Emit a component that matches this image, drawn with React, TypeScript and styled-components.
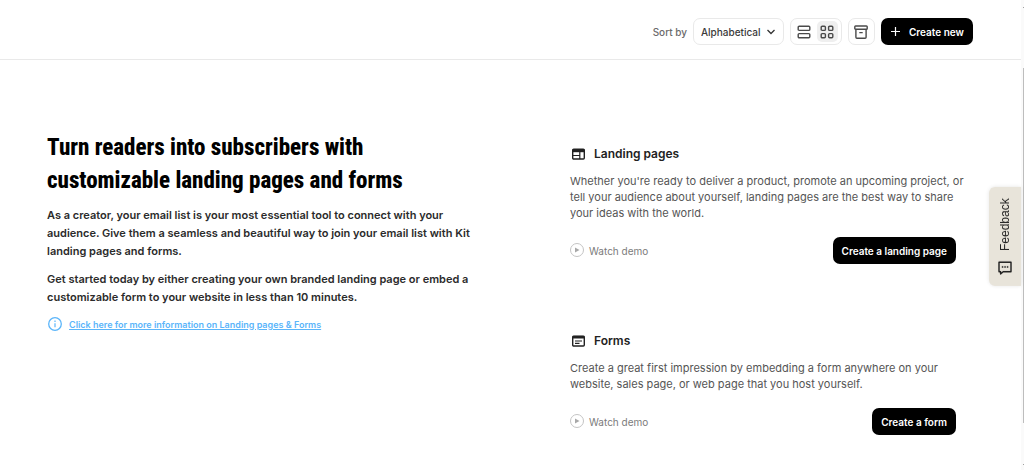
import React from "react";
import styled, { createGlobalStyle } from "styled-components";

const GlobalStyle = createGlobalStyle`
  * { box-sizing: border-box; }
  body {
    margin: 0;
    background: #fff;
    color: #2b2b2b;
    font-family: Inter, "Liberation Sans", sans-serif;
    font-size: 11px;
  }
  button, select { font: inherit; }
  h1, h2, p { margin: 0; }
`;

const Toolbar = styled.header`
  display: flex;
  align-items: center;
  justify-content: flex-end;
  gap: 6px;
  height: 60px;
  margin-right: 3px;
  padding: 4px 48px 0 16px;
  border-bottom: 1px solid #e9e9e9;
`;

const SortLabel = styled.label`
  color: #6b6b6b;
  font-size: 10px;
  font-weight: 500;
`;

const SelectWrap = styled.div`
  position: relative;
  display: flex;
`;

const SortSelect = styled.select`
  appearance: none;
  width: 91px;
  height: 27px;
  padding: 0 7px;
  border: 1px solid #e9e9e9;
  border-radius: 7px;
  background: #fff;
  color: #3a3a3a;
  font-size: 10px;
  font-weight: 500;
`;

const Chevron = styled.svg`
  position: absolute;
  right: 8px;
  top: 9px;
  pointer-events: none;
`;

const IconGroup = styled.div<{ $inset: number }>`
  display: flex;
  align-items: center;
  gap: 2px;
  height: 27px;
  padding: 0 ${(p) => p.$inset}px;
  border: 1px solid #e9e9e9;
  border-radius: 7px;
`;

const IconButton = styled.button<{ $active?: boolean }>`
  display: flex;
  align-items: center;
  justify-content: center;
  width: 21px;
  height: 21px;
  padding: 0;
  border: 0;
  border-radius: 5px;
  background: ${(p) => (p.$active ? "#efefef" : "transparent")};
  color: #4a4a4a;
`;

const PrimaryButton = styled.button`
  display: flex;
  align-items: center;
  gap: 8px;
  height: 27px;
  padding: 0 9px;
  border: 0;
  border-radius: 7px;
  background: #000;
  color: #fff;
  font-size: 10px;
  font-weight: 600;
  white-space: nowrap;
`;

const Main = styled.main`
  display: grid;
  grid-template-columns: minmax(0, 430fr) minmax(0, 386fr);
  gap: 93px;
  padding: 71px 68px 32px 47px;
`;

const Title = styled.h1`
  margin-bottom: 9px;
  color: #000;
  font-family: "Roboto Condensed", Roboto, sans-serif;
  font-size: 23px;
  font-weight: 800;
  line-height: 33px;
`;

const Lead = styled.p`
  margin-bottom: 10px;
  font-size: 11px;
  font-weight: 600;
  line-height: 18px;
`;

const InfoLink = styled.a`
  display: flex;
  align-items: center;
  gap: 6px;
  color: #5bb5fa;
  font-size: 9px;
  font-weight: 600;
`;

const Cards = styled.div`
  display: flex;
  flex-direction: column;
  gap: 69px;
  padding-top: 15px;
`;

const CardTitle = styled.h2`
  display: flex;
  align-items: center;
  gap: 7px;
  margin-bottom: 11px;
  color: #222;
  font-size: 12px;
  font-weight: 600;
  line-height: 16px;
`;

const CardText = styled.p`
  margin: 0 -12px 16px 0;
  color: #555;
  font-size: 11px;
  line-height: 16px;
`;

const CardFooter = styled.div`
  display: flex;
  align-items: center;
  justify-content: space-between;
`;

const DemoButton = styled.button`
  display: flex;
  align-items: center;
  gap: 4px;
  padding: 0;
  border: 0;
  background: none;
  color: #7b7b7b;
  font-size: 10px;
`;

const FeedbackTab = styled.button`
  position: fixed;
  right: 3px;
  top: 187px;
  display: flex;
  align-items: center;
  gap: 10px;
  width: 32px;
  height: 99px;
  padding: 11px 0;
  border: 0;
  border-radius: 0 6px 6px 0;
  background: #e8e4da;
  box-shadow: 0 0 4px rgba(0, 0, 0, 0.1);
  color: #1d1d1d;
  font-family: "Liberation Sans", sans-serif;
  font-size: 12px;
  line-height: 32px;
  writing-mode: vertical-rl;
  transform: rotate(180deg);

  svg { transform: rotate(180deg); }
`;

const ScrollTrack = styled.div`
  position: fixed;
  inset: 0 0 0 auto;
  display: flex;
  flex-direction: column;
  align-items: flex-end;
  gap: 60px;
  width: 3px;
  padding: 7px 0 5px;
  background: #fafafa;

  &::before, &::after {
    content: "";
    width: 1px;
    height: 1px;
    background: #a0a0a0;
  }
  &::after { margin-top: -19px; }
`;

const ScrollThumb = styled.div`
  flex: 1;
  width: 1px;
  background: #bdbdbd;
`;

const PlayIcon = () => (
  <svg width="15" height="15" viewBox="0 0 15 15" aria-hidden="true">
    <circle cx="7" cy="7" r="6.5" fill="none" stroke="#c4c4c4" />
    <path d="M5 4.5v5l4.5-2.5z" fill="#a8a8a8" />
  </svg>
);

const LandingIcon = () => (
  <svg width="17" height="16" viewBox="0 0 17 16" aria-hidden="true" fill="none" stroke="#222" strokeWidth="1.4">
    <rect x="2.7" y="3.2" width="11.6" height="9.8" rx="1" />
    <path d="M2.5 4.7h12" strokeWidth="3" />
    <path d="M2.7 9.5h6.8M9.8 6v7" strokeWidth="1.2" />
  </svg>
);

const FormIcon = () => (
  <svg width="17" height="16" viewBox="0 0 17 16" aria-hidden="true" fill="none" stroke="#222" strokeWidth="1.4">
    <rect x="2.7" y="3.2" width="11.6" height="9.8" rx="1" />
    <path d="M2.5 4.2h12" strokeWidth="2.6" />
    <path d="M5 8h7M5 10.3h4.5" strokeWidth="1.2" />
  </svg>
);

interface CardProps {
  icon: React.ReactNode;
  title: string;
  text: string;
  action: string;
}

const Card = ({ icon, title, text, action }: CardProps) => (
  <section>
    <CardTitle>{icon}{title}</CardTitle>
    <CardText>{text}</CardText>
    <CardFooter>
      <DemoButton type="button"><PlayIcon />Watch demo</DemoButton>
      <PrimaryButton type="button">{action}</PrimaryButton>
    </CardFooter>
  </section>
);

export default function App() {
  return (
    <>
      <GlobalStyle />
      <Toolbar>
        <SortLabel htmlFor="sort">Sort by</SortLabel>
        <SelectWrap>
          <SortSelect id="sort" defaultValue="Alphabetical">
            <option>Alphabetical</option>
          </SortSelect>
          <Chevron width="10" height="10" viewBox="0 0 10 10" fill="none" stroke="#333" strokeWidth="1.3">
            <path d="M1.5 3L5 6.5 8.5 3" />
          </Chevron>
        </SelectWrap>
        <IconGroup $inset={3}>
          <IconButton type="button" aria-label="List view">
            <svg width="14" height="14" viewBox="0 0 14 14" fill="none" stroke="currentColor" strokeWidth="1.4">
              <rect x="1.2" y="1.2" width="11.6" height="4.2" rx="1" />
              <rect x="1.2" y="8.6" width="11.6" height="4.2" rx="1" />
            </svg>
          </IconButton>
          <IconButton type="button" aria-label="Grid view" $active>
            <svg width="14" height="14" viewBox="0 0 14 14" fill="none" stroke="currentColor" strokeWidth="1.4">
              <rect x="1.2" y="1.2" width="4.2" height="4.2" rx="1" />
              <rect x="8.6" y="1.2" width="4.2" height="4.2" rx="1" />
              <rect x="1.2" y="8.6" width="4.2" height="4.2" rx="1" />
              <rect x="8.6" y="8.6" width="4.2" height="4.2" rx="1" />
            </svg>
          </IconButton>
        </IconGroup>
        <IconGroup $inset={2}>
          <IconButton type="button" aria-label="Archive">
            <svg width="14" height="14" viewBox="0 0 14 14" fill="none" stroke="currentColor" strokeWidth="1.4">
              <rect x="0.8" y="1" width="12.4" height="3.2" rx="0.8" />
              <path d="M1.9 4.2v8a1 1 0 0 0 1 1h8.2a1 1 0 0 0 1-1v-8M5.3 7.6h3.4" />
            </svg>
          </IconButton>
        </IconGroup>
        <PrimaryButton type="button">
          <svg width="11" height="11" viewBox="0 0 11 11" stroke="#fff" strokeWidth="1.2" aria-hidden="true">
            <path d="M5.5 1v9M1 5.5h9" />
          </svg>
          Create new
        </PrimaryButton>
      </Toolbar>
      <Main>
        <div>
          <Title>Turn readers into subscribers with customizable landing pages and forms</Title>
          <Lead>
            As a creator, your email list is your most essential tool to connect with your audience. Give them a
            seamless and beautiful way to join your email list with Kit landing pages and forms.
          </Lead>
          <Lead>
            Get started today by either creating your own branded landing page or embed a customizable form to your
            website in less than 10 minutes.
          </Lead>
          <InfoLink href="#info">
            <svg width="16" height="16" viewBox="0 0 16 16" fill="none" stroke="currentColor" aria-hidden="true">
              <circle cx="8" cy="8" r="6.3" strokeWidth="1.3" />
              <path d="M8 7.2v4M8 4.6v1.3" strokeWidth="1.2" />
            </svg>
            <span>Click here for more information on Landing pages &amp; Forms</span>
          </InfoLink>
        </div>
        <Cards>
          <Card
            icon={<LandingIcon />}
            title="Landing pages"
            text="Whether you're ready to deliver a product, promote an upcoming project, or tell your audience about yourself, landing pages are the best way to share your ideas with the world."
            action="Create a landing page"
          />
          <Card
            icon={<FormIcon />}
            title="Forms"
            text="Create a great first impression by embedding a form anywhere on your website, sales page, or web page that you host yourself."
            action="Create a form"
          />
        </Cards>
      </Main>
      <ScrollTrack aria-hidden="true"><ScrollThumb /></ScrollTrack>
      <FeedbackTab type="button">
        <svg width="14" height="14" viewBox="0 0 14 14" fill="none" stroke="currentColor" strokeWidth="1.4" aria-hidden="true">
          <path d="M1 1.2h12v9.6H5.2L2.6 13v-2.2H1z" strokeLinejoin="round" />
          <path d="M3.8 6h1.5M6.3 6h1.5M8.8 6h1.5" />
        </svg>
        Feedback
      </FeedbackTab>
    </>
  );
}
